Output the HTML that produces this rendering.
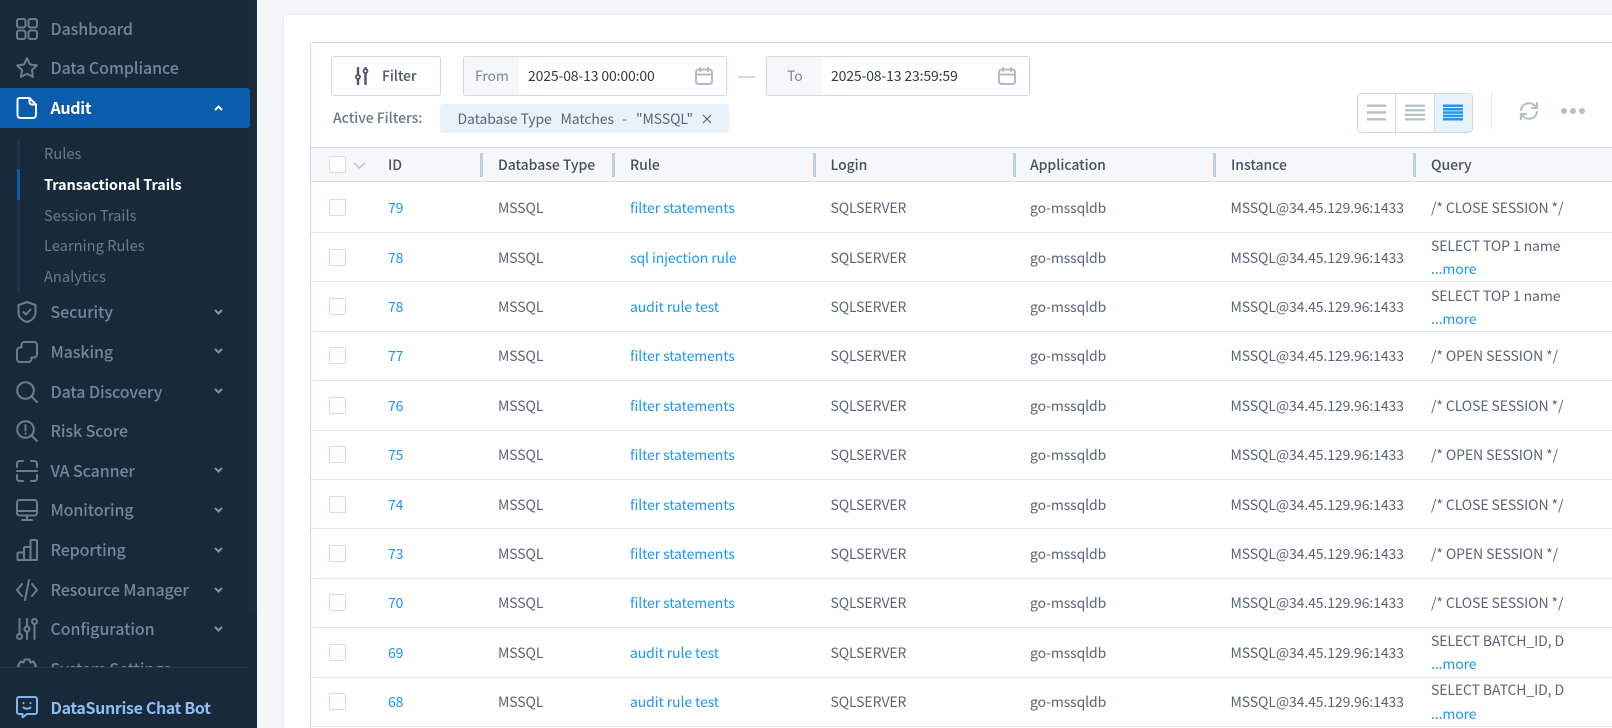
<!DOCTYPE html>
<html><head><meta charset="utf-8"><style>
*{box-sizing:border-box}
html,body{margin:0;padding:0;width:1612px;height:728px;overflow:hidden;background:#f3f6f9;font-family:"Noto Sans CJK SC","Liberation Sans",sans-serif;font-size:14px;letter-spacing:-.1px;color:#5a6478}
.a,.t{position:absolute}
.t{white-space:nowrap;line-height:20px;height:20px}
#side{position:absolute;left:0;top:0;width:257px;height:728px;background:#182a3a;overflow:hidden}
#clip{position:absolute;left:0;top:0;width:257px;height:667px;overflow:hidden}
.m{position:absolute;left:50.500px;font-size:16px;font-weight:500;letter-spacing:-.1px;color:#70889b;white-space:nowrap;line-height:24px;height:24px;margin-top:-1px}
.s{position:absolute;left:44px;font-size:14.700px;letter-spacing:0;color:#677c8d;white-space:nowrap;line-height:20px;height:20px}
svg.i{position:absolute;left:16px;width:22px;height:22px;fill:none;stroke:#6a7e8c;stroke-width:2;stroke-linecap:round;stroke-linejoin:round}
svg.c{position:absolute;left:214px;width:9px;height:6px;fill:none;stroke:#8298a8;stroke-width:2}
.r{position:absolute;left:311px;top:0;width:1301px;height:20px}
.r .t{top:0;color:#5a6478}
.r .t.b{color:#2196f3}
.l1{left:77px}.l2{left:187px}.l3{left:319px}.l4{left:519.500px}.l5{left:719px}.l6{left:919.500px}.l7{left:1120px}
.cb{position:absolute;left:18px;top:1px;width:17px;height:17px;border:1px solid #d5dee3;border-radius:2px;background:#fff}
.ln{position:absolute;left:311px;width:1301px;height:1px;background:#e1e7ec}
.h{position:absolute;top:155px;font-weight:500;color:#465162;font-size:14px;letter-spacing:-.05px;line-height:20px;white-space:nowrap}
.sp{position:absolute;top:153px;width:3px;height:24px;background:#c2d0dc}
.bx{position:absolute;border:1px solid #cfdbe0;border-radius:3px;background:#fff}
.dt{letter-spacing:-.15px;color:#2f3a4a}
</style></head><body>

<div id="side">
<div class="a" style="left:248px;top:0;width:9px;height:612px;background:#1b2d3d"></div>
<div id="clip">
<svg class="i" style="top:18px" viewBox="0 0 22 22"><rect x="1" y="1" width="8.500" height="8.500" rx="2"/><rect x="12.500" y="1" width="8.500" height="8.500" rx="2"/><rect x="1" y="12.500" width="8.500" height="8.500" rx="2"/><rect x="12.500" y="12.500" width="8.500" height="8.500" rx="2"/></svg>
<div class="m" style="top:17px">Dashboard</div>
<svg class="i" style="top:57px" viewBox="0 0 22 22"><path d="M11 1.200l3 6.300 6.800.9-5 4.700 1.300 6.800L11 16.700l-6.100 3.200 1.300-6.800-5-4.700 6.800-.9z"/></svg>
<div class="m" style="top:56px">Data Compliance</div>
<div class="a" style="left:0;top:88px;width:250px;height:40px;background:#0a5dad;border-radius:0 3px 3px 0"></div>
<svg class="i" style="top:97px;stroke:#fff" viewBox="0 0 22 22"><path d="M3.500 1h10L20 7.500V18a3 3 0 0 1-3 3H4.500a3 3 0 0 1-3-3V3a2 2 0 0 1 2-2z"/><path d="M13.500 1v4a2.500 2.500 0 0 0 2.500 2.500h4" /></svg>
<div class="m" style="top:96px;color:#fff;font-weight:700;letter-spacing:-.3px">Audit</div>
<svg class="c" style="top:105px;stroke:#fff" viewBox="0 0 9 6"><path d="M1 5l3.500-3.500L8 5"/></svg>

<div class="a" style="left:17px;top:139px;width:3px;height:154px;background:#1e3548"></div>
<div class="a" style="left:17px;top:169px;width:3px;height:31px;background:#0a5dad"></div>
<div class="s" style="top:144px">Rules</div>
<div class="s" style="top:175px;color:#fff;font-weight:700;font-size:14.500px;letter-spacing:-.1px">Transactional Trails</div>
<div class="s" style="top:206px">Session Trails</div>
<div class="s" style="top:236px">Learning Rules</div>
<div class="s" style="top:267px">Analytics</div>

<svg class="i" style="top:301px" viewBox="0 0 22 22"><path d="M11 1l8.500 3v7c0 5-3.500 8.500-8.500 10-5-1.500-8.500-5-8.500-10V4z"/><path d="M7.500 11l2.500 2.500 4.500-5"/></svg>
<div class="m" style="top:300px">Security</div>
<svg class="c" style="top:309px" viewBox="0 0 9 6"><path d="M1 1l3.500 3.500L8 1"/></svg>

<svg class="i" style="top:341px" viewBox="0 0 22 22"><path d="M8.500 1H18a3 3 0 0 1 3 3v9.500a3 3 0 0 1-3 3h-2.500V18a3 3 0 0 1-3 3H4a3 3 0 0 1-3-3V9.500a3 3 0 0 1 3-3h1.500V4a3 3 0 0 1 3-3z"/></svg>
<div class="m" style="top:340px">Masking</div>
<svg class="c" style="top:348px" viewBox="0 0 9 6"><path d="M1 1l3.500 3.500L8 1"/></svg>

<svg class="i" style="top:381px" viewBox="0 0 22 22"><circle cx="9.500" cy="9.500" r="8.300"/><path d="M15.500 15.500L21 21"/></svg>
<div class="m" style="top:380px">Data Discovery</div>
<svg class="c" style="top:388px" viewBox="0 0 9 6"><path d="M1 1l3.500 3.500L8 1"/></svg>

<svg class="i" style="top:420px" viewBox="0 0 22 22"><circle cx="9.500" cy="9.500" r="8.300"/><path d="M15.500 15.500L21 21M9.500 5v5.500M9.500 13.500v.3"/></svg>
<div class="m" style="top:419px">Risk Score</div>

<svg class="i" style="top:460px" viewBox="0 0 22 22"><path d="M1 7V3.500A2.500 2.500 0 0 1 3.500 1H7M15 1h3.500A2.500 2.500 0 0 1 21 3.500V7M1 15v3.500A2.500 2.500 0 0 0 3.500 21H7M15 21h3.500a2.500 2.500 0 0 0 2.500-2.500V15M1 11h20"/></svg>
<div class="m" style="top:459px">VA Scanner</div>
<svg class="c" style="top:467px" viewBox="0 0 9 6"><path d="M1 1l3.500 3.500L8 1"/></svg>

<svg class="i" style="top:499px" viewBox="0 0 22 22"><rect x="1" y="1" width="20" height="15.500" rx="2.500"/><path d="M1 12h20M11 16.500V21M6 21h10"/></svg>
<div class="m" style="top:498px">Monitoring</div>
<svg class="c" style="top:507px" viewBox="0 0 9 6"><path d="M1 1l3.500 3.500L8 1"/></svg>

<svg class="i" style="top:539px" viewBox="0 0 22 22"><path d="M1.500 21v-6.500a1 1 0 0 1 1-1h5.500V21zM8 21V9a1 1 0 0 1 1-1h5.500V21zM14.500 21V2a1 1 0 0 1 1-1H20a1 1 0 0 1 1 1v19z"/></svg>
<div class="m" style="top:538px">Reporting</div>
<svg class="c" style="top:547px" viewBox="0 0 9 6"><path d="M1 1l3.500 3.500L8 1"/></svg>

<svg class="i" style="top:579px" viewBox="0 0 22 22"><path d="M6 5L1 11l5 6M16 5l5 6-5 6M13 1L9 21"/></svg>
<div class="m" style="top:578px">Resource Manager</div>
<svg class="c" style="top:587px" viewBox="0 0 9 6"><path d="M1 1l3.500 3.500L8 1"/></svg>

<svg class="i" style="top:618px" viewBox="0 0 22 22"><path d="M3.500 1v14.500M11 1v7M11 13.500V21M18.500 6.500V21"/><circle cx="3.500" cy="18.500" r="2.500"/><circle cx="11" cy="11" r="2.500"/><circle cx="18.500" cy="3.500" r="2.500"/></svg>
<div class="m" style="top:617px">Configuration</div>
<svg class="c" style="top:626px" viewBox="0 0 9 6"><path d="M1 1l3.500 3.500L8 1"/></svg>

<svg class="i" style="top:658px" viewBox="0 0 22 22"><path d="M8.500 1.500h5l1 3 3-1 2.500 4.500-2 2.500v1l2 2.500-2.500 4.500-3-1-1 3h-5l-1-3-3 1L2 14l2-2.500v-1L2 8l2.500-4.500 3 1z"/></svg>
<div class="m" style="top:657px">System Settings</div>
</div>
<div class="a" style="left:0;top:667px;width:248px;height:1px;background:#243c52"></div>
<svg class="i" style="top:696px;stroke:#7fb5f2" viewBox="0 0 22 22"><path d="M3 1h16a2 2 0 0 1 2 2v13a2 2 0 0 1-2 2H11l-4.500 3.500V18H3a2 2 0 0 1-2-2V3a2 2 0 0 1 2-2z"/><path d="M7.500 7v.2M14.500 7v.2M7.500 11.500c2 1.700 5 1.700 7 0"/></svg>
<div class="m" style="top:696px;color:#8fbdf5;font-weight:700;letter-spacing:-.35px">DataSunrise Chat Bot</div>
</div>

<div class="a" style="left:284px;top:15px;width:1328px;height:713px;background:#fff;border-radius:4px 0 0 0;box-shadow:0 0 2px rgba(190,205,215,.5)"></div>
<div class="a" style="left:310px;top:42px;width:1302px;height:686px;border:1px solid #cfdbe0;border-right:0;border-bottom:0;border-radius:3px 0 0 0"></div>

<div class="bx" style="left:331px;top:56px;width:110px;height:40px"></div>
<svg class="a" style="left:354px;top:67px;width:16px;height:18px;fill:none;stroke:#4b5667;stroke-width:2.400;stroke-linecap:round" viewBox="0 0 16 18"><path d="M4 1v6M4 12v5M11.500 6.500V17M11.500 1v1"/><circle cx="4" cy="10" r="2" stroke-width="1.800"/><circle cx="11.500" cy="4" r="2" stroke-width="1.800"/></svg>
<div class="t" style="left:382px;top:66px;font-weight:500;color:#4b5667">Filter</div>

<div class="bx" style="left:463px;top:56px;width:264px;height:40px;overflow:hidden"><div class="a" style="left:0;top:0;width:55px;height:38px;background:#f5f7f9"></div></div>
<div class="t" style="left:475px;top:66px;color:#7c8796">From</div>
<div class="t dt" style="left:528px;top:66px">2025-08-13 00:00:00</div>
<svg class="a" style="left:695px;top:67px;width:18px;height:18px;fill:none;stroke:#b0bcc6;stroke-width:2;stroke-linecap:round" viewBox="0 0 18 18"><rect x="1" y="2.500" width="16" height="14.500" rx="2.500"/><path d="M1 7.500h16M5 1v3M13 1v3"/></svg>
<div class="a" style="left:738px;top:75.500px;width:17px;height:2px;background:#cfdbe0"></div>
<div class="bx" style="left:766px;top:56px;width:264px;height:40px;overflow:hidden"><div class="a" style="left:0;top:0;width:55px;height:38px;background:#f5f7f9"></div></div>
<div class="t" style="left:787px;top:66px;color:#7c8796">To</div>
<div class="t dt" style="left:831px;top:66px">2025-08-13 23:59:59</div>
<svg class="a" style="left:998px;top:67px;width:18px;height:18px;fill:none;stroke:#b0bcc6;stroke-width:2;stroke-linecap:round" viewBox="0 0 18 18"><rect x="1" y="2.500" width="16" height="14.500" rx="2.500"/><path d="M1 7.500h16M5 1v3M13 1v3"/></svg>

<div class="t" style="left:333px;top:108px;font-weight:500;color:#6b7789;font-size:14px;letter-spacing:-.03px">Active Filters:</div>
<div class="a" style="left:440px;top:104px;width:289px;height:29px;background:#e8f2fb;border-radius:3px"></div>
<div class="t" style="left:457.500px;top:109px;color:#5a6478">Database Type</div>
<div class="t" style="left:560.500px;top:109px;color:#5a6478">Matches</div>
<div class="t" style="left:622px;top:109px;color:#5a6478">-</div>
<div class="t" style="left:636px;top:109px;color:#5a6478">"MSSQL"</div>
<svg class="a" style="left:702px;top:114px;width:10px;height:10px;fill:none;stroke:#5a6478;stroke-width:1.200" viewBox="0 0 10 10"><path d="M1 1l8 8M9 1l-8 8"/></svg>

<div class="bx" style="left:1357px;top:93px;width:116px;height:40px;border-radius:4px;overflow:hidden"><div class="a" style="left:76px;top:0;width:40px;height:38px;background:#e8f2fb"></div><div class="a" style="left:37px;top:0;width:1px;height:38px;background:#cfdbe0"></div><div class="a" style="left:76px;top:0;width:1px;height:38px;background:#cfdbe0"></div></div>
<svg class="a" style="left:1360px;top:100px;width:110px;height:26px" viewBox="0 0 110 26" shape-rendering="geometricPrecision">
<g fill="#b4c0c8"><rect x="7" y="4.500" width="19" height="2.400"/><rect x="7" y="11.200" width="19" height="2.400"/><rect x="7" y="18.100" width="19" height="2.400"/><rect x="45" y="4.600" width="20" height="2.200"/><rect x="45" y="9.200" width="20" height="2.200"/><rect x="45" y="13.800" width="20" height="2.200"/><rect x="45" y="18.300" width="20" height="2.200"/></g>
<g fill="#2196f3"><rect x="83" y="4.500" width="20" height="2.500"/><rect x="83" y="8" width="20" height="2.500"/><rect x="83" y="11.300" width="20" height="2.500"/><rect x="83" y="14.700" width="20" height="2.500"/><rect x="83" y="18" width="20" height="2.500"/></g></svg>
<div class="a" style="left:1491px;top:93px;width:1px;height:36px;background:#e6ebef"></div>
<svg class="a" style="left:1519px;top:101px;width:20px;height:20px;fill:none;stroke:#b4c0c8;stroke-width:2.200;stroke-linecap:round;stroke-linejoin:round" viewBox="0 0 20 20"><path d="M2 9a8 8 0 0 1 14-4l2 2M18 2v5h-5M18 11a8 8 0 0 1-14 4l-2-2M2 18v-5h5"/></svg>
<div class="a" style="left:1561px;top:108px;width:6px;height:6px;border-radius:50%;background:#b4c0c8"></div>
<div class="a" style="left:1570px;top:108px;width:6px;height:6px;border-radius:50%;background:#b4c0c8"></div>
<div class="a" style="left:1579px;top:108px;width:6px;height:6px;border-radius:50%;background:#b4c0c8"></div>

<div class="a" style="left:311px;top:147px;width:1301px;height:35px;background:#f5f7f9;border-top:1px solid #d3dde3;border-bottom:1px solid #d3dde3"></div>
<div class="cb" style="left:329px;top:156px"></div>
<svg class="a" style="left:353px;top:162px;width:13px;height:7px;fill:none;stroke:#b8c4cc;stroke-width:1.400" viewBox="0 0 13 7"><path d="M1 1l5.500 5L12 1"/></svg>
<div class="h" style="left:388px">ID</div>
<div class="h" style="left:498px">Database Type</div>
<div class="h" style="left:630px">Rule</div>
<div class="h" style="left:830.500px">Login</div>
<div class="h" style="left:1030px">Application</div>
<div class="h" style="left:1231px">Instance</div>
<div class="h" style="left:1431px">Query</div>
<div class="sp" style="left:480px"></div><div class="sp" style="left:612px"></div><div class="sp" style="left:813px"></div><div class="sp" style="left:1013px"></div><div class="sp" style="left:1213px"></div><div class="sp" style="left:1413px"></div>

<div class="ln" style="top:232px"></div><div class="ln" style="top:281px"></div><div class="ln" style="top:331px"></div><div class="ln" style="top:380px"></div><div class="ln" style="top:430px"></div><div class="ln" style="top:479px"></div><div class="ln" style="top:528px"></div><div class="ln" style="top:578px"></div><div class="ln" style="top:627px"></div><div class="ln" style="top:677px"></div><div class="ln" style="top:726px"></div>

<div class="r" style="top:198px"><div class="cb"></div><div class="t l1 b">79</div><div class="t l2">MSSQL</div><div class="t l3 b">filter statements</div><div class="t l4">SQLSERVER</div><div class="t l5">go-mssqldb</div><div class="t l6">MSSQL@34.45.129.96:1433</div><div class="t l7">/* CLOSE SESSION */</div></div>
<div class="r" style="top:248px"><div class="cb"></div><div class="t l1 b">78</div><div class="t l2">MSSQL</div><div class="t l3 b">sql injection rule</div><div class="t l4">SQLSERVER</div><div class="t l5">go-mssqldb</div><div class="t l6">MSSQL@34.45.129.96:1433</div><div class="t l7" style="top:-12px">SELECT TOP 1 name</div><div class="t l7 b" style="top:11px">...more</div></div>
<div class="r" style="top:297px"><div class="cb"></div><div class="t l1 b">78</div><div class="t l2">MSSQL</div><div class="t l3 b">audit rule test</div><div class="t l4">SQLSERVER</div><div class="t l5">go-mssqldb</div><div class="t l6">MSSQL@34.45.129.96:1433</div><div class="t l7" style="top:-11px">SELECT TOP 1 name</div><div class="t l7 b" style="top:12px">...more</div></div>
<div class="r" style="top:346px"><div class="cb"></div><div class="t l1 b">77</div><div class="t l2">MSSQL</div><div class="t l3 b">filter statements</div><div class="t l4">SQLSERVER</div><div class="t l5">go-mssqldb</div><div class="t l6">MSSQL@34.45.129.96:1433</div><div class="t l7">/* OPEN SESSION */</div></div>
<div class="r" style="top:396px"><div class="cb"></div><div class="t l1 b">76</div><div class="t l2">MSSQL</div><div class="t l3 b">filter statements</div><div class="t l4">SQLSERVER</div><div class="t l5">go-mssqldb</div><div class="t l6">MSSQL@34.45.129.96:1433</div><div class="t l7">/* CLOSE SESSION */</div></div>
<div class="r" style="top:445px"><div class="cb"></div><div class="t l1 b">75</div><div class="t l2">MSSQL</div><div class="t l3 b">filter statements</div><div class="t l4">SQLSERVER</div><div class="t l5">go-mssqldb</div><div class="t l6">MSSQL@34.45.129.96:1433</div><div class="t l7">/* OPEN SESSION */</div></div>
<div class="r" style="top:495px"><div class="cb"></div><div class="t l1 b">74</div><div class="t l2">MSSQL</div><div class="t l3 b">filter statements</div><div class="t l4">SQLSERVER</div><div class="t l5">go-mssqldb</div><div class="t l6">MSSQL@34.45.129.96:1433</div><div class="t l7">/* CLOSE SESSION */</div></div>
<div class="r" style="top:544px"><div class="cb"></div><div class="t l1 b">73</div><div class="t l2">MSSQL</div><div class="t l3 b">filter statements</div><div class="t l4">SQLSERVER</div><div class="t l5">go-mssqldb</div><div class="t l6">MSSQL@34.45.129.96:1433</div><div class="t l7">/* OPEN SESSION */</div></div>
<div class="r" style="top:593px"><div class="cb"></div><div class="t l1 b">70</div><div class="t l2">MSSQL</div><div class="t l3 b">filter statements</div><div class="t l4">SQLSERVER</div><div class="t l5">go-mssqldb</div><div class="t l6">MSSQL@34.45.129.96:1433</div><div class="t l7">/* CLOSE SESSION */</div></div>
<div class="r" style="top:643px"><div class="cb"></div><div class="t l1 b">69</div><div class="t l2">MSSQL</div><div class="t l3 b">audit rule test</div><div class="t l4">SQLSERVER</div><div class="t l5">go-mssqldb</div><div class="t l6">MSSQL@34.45.129.96:1433</div><div class="t l7" style="top:-12px">SELECT BATCH_ID, D</div><div class="t l7 b" style="top:11px">...more</div></div>
<div class="r" style="top:692px"><div class="cb"></div><div class="t l1 b">68</div><div class="t l2">MSSQL</div><div class="t l3 b">audit rule test</div><div class="t l4">SQLSERVER</div><div class="t l5">go-mssqldb</div><div class="t l6">MSSQL@34.45.129.96:1433</div><div class="t l7" style="top:-12px">SELECT BATCH_ID, D</div><div class="t l7 b" style="top:12px">...more</div></div>
</body></html>
